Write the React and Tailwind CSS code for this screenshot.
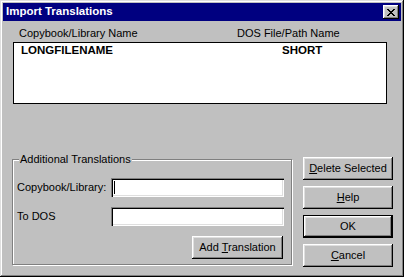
// App.jsx - Import Translations dialog (Win95 style)

const FONT = { fontFamily: '"Liberation Sans", Arial, sans-serif' }

const RAISED =
  'shadow-[inset_-1px_-1px_0_#000,inset_1px_1px_0_#fff,inset_-2px_-2px_0_#808080,inset_2px_2px_0_#dfdfdf]'
const RAISED_DEFAULT =
  'shadow-[inset_0_0_0_1px_#000,inset_-2px_-2px_0_#000,inset_2px_2px_0_#fff,inset_-3px_-3px_0_#808080,inset_3px_3px_0_#dfdfdf]'
const SUNKEN =
  'shadow-[inset_1px_1px_0_#808080,inset_2px_2px_0_#000,inset_-1px_-1px_0_#fff,inset_-2px_-2px_0_#dfdfdf]'

// Win95 close glyph, 8x7 pixels
const CLOSE_ROWS = ['XX....XX', '.XX..XX.', '..XXXX..', '...XX...', '..XXXX..', '.XX..XX.', 'XX....XX']

function CloseGlyph() {
  const rects = []
  CLOSE_ROWS.forEach((row, y) => {
    row.split('').forEach((c, x) => {
      if (c === 'X') rects.push(<rect key={`${x}-${y}`} x={x} y={y} width="1" height="1" />)
    })
  })
  return (
    <svg width="8" height="7" viewBox="0 0 8 7" fill="#000" shapeRendering="crispEdges">
      {rects}
    </svg>
  )
}

function Button({ children, isDefault = false, className = '' }) {
  return (
    <div
      className={`flex items-center justify-center h-[23px] bg-[#c0c0c0] text-[11px] text-black leading-none ${
        isDefault ? RAISED_DEFAULT : RAISED
      } ${className}`}
    >
      {children}
    </div>
  )
}

function Field({ label, withCursor }) {
  return (
    <div className="flex items-center h-[19px]">
      <div className="w-[94px] text-[11px] text-black leading-none">{label}</div>
      <div className={`relative w-[173px] h-[19px] bg-white ${SUNKEN}`}>
        {withCursor && <div className="absolute left-[3px] top-[3px] w-[1px] h-[13px] bg-black" />}
      </div>
    </div>
  )
}

export default function App() {
  return (
    <div
      className="w-[404px] h-[277px] bg-[#c0c0c0] p-[3px] flex flex-col shadow-[inset_-1px_-1px_0_#000,inset_1px_1px_0_#dfdfdf,inset_-2px_-2px_0_#808080,inset_2px_2px_0_#fff]"
      style={FONT}
    >
      {/* Title bar */}
      <div className="h-[18px] bg-[#000080] flex items-center justify-between pl-[3px] pr-[2px]">
        <span className="text-white font-bold text-[11.5px] leading-none">Import Translations</span>
        <div className={`w-[16px] h-[14px] bg-[#c0c0c0] flex items-center justify-center pl-[0px] ${RAISED}`}>
          <CloseGlyph />
        </div>
      </div>

      {/* Column headers */}
      <div className="flex pl-[16px] pt-[6px] h-[18px] text-[11px] text-black leading-[12px]">
        <div className="w-[218px]">Copybook/Library Name</div>
        <div>DOS File/Path Name</div>
      </div>

      {/* List box */}
      <div className="ml-[10px] mt-[3px] w-[374px] h-[62px] bg-white border border-black">
        <div className="flex pl-[7px] pt-[1px] text-[11.5px] font-bold text-black leading-[12px]">
          <div className="w-[261px]">LONGFILENAME</div>
          <div>SHORT</div>
        </div>
      </div>

      {/* Lower area */}
      <div className="flex mt-[53px]">
        {/* Group box */}
        <div className="relative ml-[9px] mt-[2px] w-[280px] h-[106px] border border-[#808080] shadow-[inset_1px_1px_0_#fff,1px_1px_0_#fff]">
          <span className="absolute left-[6px] top-[-7px] px-[1px] bg-[#c0c0c0] text-[11px] leading-[12px] text-black">
            Additional Translations
          </span>
          <div className="flex flex-col gap-[10px] pl-[4px] pt-[18px]">
            <Field label="Copybook/Library:" withCursor />
            <Field label="To DOS" />
            <div className="flex justify-end pr-[8px]">
              <Button className="w-[91px]">
                <span>
                  Add <u className="underline-offset-1">T</u>ranslation
                </span>
              </Button>
            </div>
          </div>
        </div>

        {/* Buttons column */}
        <div className="ml-[11px] flex flex-col gap-[6px]">
          <Button className="w-[90px]">
            <span>
              <u className="underline-offset-1">D</u>elete Selected
            </span>
          </Button>
          <Button className="w-[90px]">
            <span>
              <u className="underline-offset-1">H</u>elp
            </span>
          </Button>
          <Button className="w-[90px]" isDefault>
            OK
          </Button>
          <Button className="w-[90px]">
            <span>
              <u className="underline-offset-1">C</u>ancel
            </span>
          </Button>
        </div>
      </div>
    </div>
  )
}
